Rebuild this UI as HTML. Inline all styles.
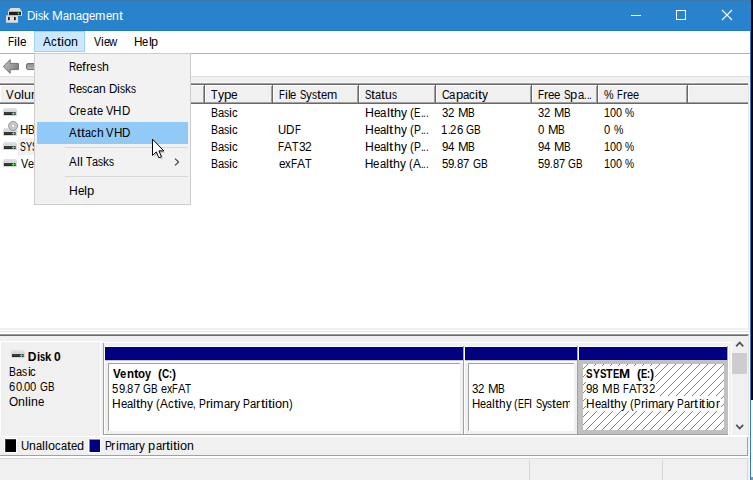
<!DOCTYPE html>
<html>
<head>
<meta charset="utf-8">
<title>Disk Management</title>
<style>
html,body{margin:0;padding:0;}
body{width:753px;height:480px;overflow:hidden;position:relative;background:#f0f0f0;font-family:"Liberation Sans",sans-serif;font-size:12px;}
.a{position:absolute;}
.t{position:absolute;white-space:pre;line-height:16px;height:16px;font-size:12px;}
.t i{position:absolute;top:0;font-style:normal;white-space:pre;transform-origin:0 0;}
.tbg{position:absolute;}
#win{position:absolute;left:0;top:0;width:750px;height:480px;overflow:hidden;background:#f0f0f0;}
</style>
</head>
<body>
<!-- outside-right strip -->
<div class="a" style="left:751px;top:0;width:2px;height:400px;background:#000"></div>
<div class="a" style="left:751px;top:400px;width:2px;height:77px;background:#fff"></div>
<div class="a" style="left:751px;top:477px;width:2px;height:3px;background:#8f9499"></div>
<div class="a" style="left:750px;top:0;width:1px;height:480px;background:#3079bb"></div>
<div class="a" style="left:750px;top:0;width:1px;height:31px;background:#2b7fc6"></div>

<div id="win">
<!-- title bar -->
<div class="a" style="left:0;top:0;width:750px;height:31px;background:#2982cc"></div>
<div class="a" style="left:0;top:0;width:750px;height:1px;background:#3a79ad"></div>
<div class="a" style="left:0;top:30px;width:750px;height:1px;background:#1f79c9"></div>
<!-- title icon -->
<svg class="a" style="left:5px;top:7px" width="19" height="17" viewBox="5 7 19 17">
  <path d="M10.5 8 L19.5 8 L22 11.6 L8 11.6 Z" fill="#dcdcdc"/>
  <rect x="8" y="11.3" width="14" height="4.6" rx="0.6" fill="#e4e4e4"/>
  <rect x="9" y="11.8" width="12" height="3.4" fill="#1e1e1e"/>
  <circle cx="18.5" cy="13.5" r="0.9" fill="#3fe03f"/>
  <rect x="6" y="15.2" width="12" height="7.6" rx="0.6" fill="#dedede"/>
  <rect x="6" y="15.2" width="12" height="1" fill="#b9b2ac"/>
  <rect x="8" y="17" width="1.7" height="3.2" fill="#1c1c1c"/>
  <rect x="14" y="17" width="1.7" height="3.2" fill="#1c1c1c"/>
</svg>
<!-- window controls -->
<div class="a" style="left:631px;top:15px;width:10px;height:1px;background:#fff"></div>
<div class="a" style="left:676px;top:10px;width:8px;height:8px;border:1px solid #fff"></div>
<svg class="a" style="left:721px;top:9px" width="12" height="12" viewBox="0 0 12 12"><path d="M1 1 L11 11 M11 1 L1 11" stroke="#fff" stroke-width="1.1" fill="none"/></svg>

<!-- menu bar -->
<div class="a" style="left:0;top:31px;width:750px;height:22px;background:#fff"></div>
<div class="a" style="left:34px;top:31px;width:49px;height:19px;background:#cce8ff;border:1px solid #99d1ff"></div>
<div class="a" style="left:0;top:53px;width:750px;height:1px;background:#b2b2b2"></div>
<!-- toolbar -->
<div class="a" style="left:0;top:54px;width:750px;height:23px;background:#fff"></div>
<div class="a" style="left:0;top:76px;width:750px;height:1px;background:#dfdfdf"></div>
<div class="a" style="left:0;top:82px;width:750px;height:1px;background:#f8f8f8"></div>
<!-- back arrow -->
<svg class="a" style="left:2px;top:58px" width="18" height="17" viewBox="0 0 18 17">
  <defs><linearGradient id="ga" x1="0" y1="0" x2="1" y2="0.35"><stop offset="0" stop-color="#c4c4c4"/><stop offset="0.55" stop-color="#a2a2a2"/><stop offset="1" stop-color="#858585"/></linearGradient></defs>
  <path d="M1.2 8.5 L8.2 1.6 L8.2 5.4 L16.4 5.4 L16.4 11.6 L8.2 11.6 L8.2 15.4 Z" fill="url(#ga)" stroke="#737373" stroke-width="1" stroke-linejoin="round"/>
</svg>
<div class="a" style="left:26px;top:63px;width:10px;height:5px;background:linear-gradient(#8e8e8e,#b4b4b4);border:1px solid #737373;border-radius:2px"></div>

<!-- list view -->
<div class="a" style="left:0;top:83px;width:750px;height:1px;background:#a0a0a0"></div>
<div class="a" style="left:0;top:84px;width:750px;height:1px;background:#696969"></div>
<div class="a" style="left:0;top:85px;width:750px;height:243px;background:#fff"></div>
<!-- header -->
<div class="a" id="hdr" style="left:0;top:85px;width:688px;height:19px;"></div>
<div class="a" style="left:0px;top:85px;width:748px;height:19px;background:#f0f0f0;"></div>
<div class="a" style="left:0px;top:85px;width:748px;height:1px;background:#fff;"></div>
<div class="a" style="left:0px;top:102px;width:748px;height:1px;background:#a0a0a0;"></div>
<div class="a" style="left:0px;top:103px;width:748px;height:1px;background:#696969;"></div>
<div class="a" style="left:0px;top:85px;width:1px;height:17px;background:#fff;"></div>
<div class="a" style="left:203px;top:86px;width:1px;height:17px;background:#a0a0a0;"></div>
<div class="a" style="left:204px;top:85px;width:1px;height:19px;background:#696969;"></div>
<div class="a" style="left:205px;top:85px;width:1px;height:17px;background:#fff;"></div>
<div class="a" style="left:271px;top:86px;width:1px;height:17px;background:#a0a0a0;"></div>
<div class="a" style="left:272px;top:85px;width:1px;height:19px;background:#696969;"></div>
<div class="a" style="left:273px;top:85px;width:1px;height:17px;background:#fff;"></div>
<div class="a" style="left:357px;top:86px;width:1px;height:17px;background:#a0a0a0;"></div>
<div class="a" style="left:358px;top:85px;width:1px;height:19px;background:#696969;"></div>
<div class="a" style="left:359px;top:85px;width:1px;height:17px;background:#fff;"></div>
<div class="a" style="left:434px;top:86px;width:1px;height:17px;background:#a0a0a0;"></div>
<div class="a" style="left:435px;top:85px;width:1px;height:19px;background:#696969;"></div>
<div class="a" style="left:436px;top:85px;width:1px;height:17px;background:#fff;"></div>
<div class="a" style="left:530px;top:86px;width:1px;height:17px;background:#a0a0a0;"></div>
<div class="a" style="left:531px;top:85px;width:1px;height:19px;background:#696969;"></div>
<div class="a" style="left:532px;top:85px;width:1px;height:17px;background:#fff;"></div>
<div class="a" style="left:596px;top:86px;width:1px;height:17px;background:#a0a0a0;"></div>
<div class="a" style="left:597px;top:85px;width:1px;height:19px;background:#696969;"></div>
<div class="a" style="left:598px;top:85px;width:1px;height:17px;background:#fff;"></div>
<div class="a" style="left:686px;top:86px;width:1px;height:17px;background:#a0a0a0;"></div>
<div class="a" style="left:687px;top:85px;width:1px;height:19px;background:#696969;"></div>
<div class="a" style="left:688px;top:85px;width:1px;height:17px;background:#fff;"></div>
<div class="a" style="left:748px;top:83px;width:1px;height:353px;background:#e3e3e3;"></div>
<div class="a" style="left:749px;top:83px;width:1px;height:353px;background:#fff;"></div>
<!-- selected row (inactive) -->
<div class="a" style="left:18px;top:138px;width:70px;height:17px;background:#f0f0f0"></div>
<svg class="a" style="left:3px;top:108px" width="14" height="8" viewBox="0 0 14 8"><path d="M1.2 0 L12.8 0 L14 2.2 L14 8 L0 8 L0 2.2 Z" fill="#d6d8dc"/><path d="M1.2 0 L12.8 0 L13.6 1.6 L0.4 1.6 Z" fill="#dfe1e4"/><rect x="1" y="4.1" width="11.6" height="2.9" fill="#2b2b2b"/><rect x="1.8" y="5.3" width="6.4" height="0.5" fill="#4a4a4a"/><rect x="8.8" y="5" width="3.1" height="1.1" fill="#2fd82f"/><rect x="9.8" y="4.1" width="1.1" height="2.9" fill="#2fd82f"/><rect x="9.8" y="5" width="1.1" height="1.1" fill="#7dff7d"/></svg>
<svg class="a" style="left:3px;top:128px" width="14" height="8" viewBox="0 0 14 8"><path d="M1.2 0 L12.8 0 L14 2.2 L14 8 L0 8 L0 2.2 Z" fill="#d6d8dc"/><path d="M1.2 0 L12.8 0 L13.6 1.6 L0.4 1.6 Z" fill="#dfe1e4"/><rect x="1" y="4.1" width="11.6" height="2.9" fill="#2b2b2b"/><rect x="1.8" y="5.3" width="6.4" height="0.5" fill="#4a4a4a"/><rect x="8.8" y="5" width="3.1" height="1.1" fill="#2fd82f"/><rect x="9.8" y="4.1" width="1.1" height="2.9" fill="#2fd82f"/><rect x="9.8" y="5" width="1.1" height="1.1" fill="#7dff7d"/></svg>
<svg class="a" style="left:7px;top:120px" width="12" height="12" viewBox="0 0 12 12"><circle cx="6.1" cy="5.9" r="4.5" fill="#c9ccca" stroke="#8a8c8a" stroke-width="0.9"/><circle cx="6.1" cy="5.9" r="2.3" fill="#b4b7b5"/><circle cx="6.1" cy="5.9" r="1.3" fill="#fff"/></svg>
<svg class="a" style="left:3px;top:142px" width="14" height="8" viewBox="0 0 14 8"><path d="M1.2 0 L12.8 0 L14 2.2 L14 8 L0 8 L0 2.2 Z" fill="#d6d8dc"/><path d="M1.2 0 L12.8 0 L13.6 1.6 L0.4 1.6 Z" fill="#dfe1e4"/><rect x="1" y="4.1" width="11.6" height="2.9" fill="#2b2b2b"/><rect x="1.8" y="5.3" width="6.4" height="0.5" fill="#4a4a4a"/><rect x="8.8" y="5" width="3.1" height="1.1" fill="#2fd82f"/><rect x="9.8" y="4.1" width="1.1" height="2.9" fill="#2fd82f"/><rect x="9.8" y="5" width="1.1" height="1.1" fill="#7dff7d"/></svg>
<svg class="a" style="left:3px;top:159px" width="14" height="8" viewBox="0 0 14 8"><path d="M1.2 0 L12.8 0 L14 2.2 L14 8 L0 8 L0 2.2 Z" fill="#d6d8dc"/><path d="M1.2 0 L12.8 0 L13.6 1.6 L0.4 1.6 Z" fill="#dfe1e4"/><rect x="1" y="4.1" width="11.6" height="2.9" fill="#2b2b2b"/><rect x="1.8" y="5.3" width="6.4" height="0.5" fill="#4a4a4a"/><rect x="8.8" y="5" width="3.1" height="1.1" fill="#2fd82f"/><rect x="9.8" y="4.1" width="1.1" height="2.9" fill="#2fd82f"/><rect x="9.8" y="5" width="1.1" height="1.1" fill="#7dff7d"/></svg>

<!-- splitter -->
<div class="a" style="left:0;top:328px;width:750px;height:2px;background:#f0f0f0"></div>
<div class="a" style="left:0;top:330px;width:750px;height:1px;background:#fff"></div>
<div class="a" style="left:0;top:331px;width:750px;height:1px;background:#e3e3e3"></div>
<div class="a" style="left:0;top:332px;width:750px;height:2px;background:#fff"></div>
<div class="a" style="left:0;top:334px;width:749px;height:1px;background:#a0a0a0"></div>
<div class="a" style="left:0;top:335px;width:748px;height:1px;background:#696969"></div>

<!-- graphical view -->
<div class="a" style="left:0px;top:336px;width:748px;height:101px;background:#f0f0f0;"></div>
<div class="a" style="left:0px;top:341px;width:103px;height:1px;background:#fff;"></div>
<div class="a" style="left:103px;top:342px;width:629px;height:1px;background:#fff;"></div>
<div class="a" style="left:0px;top:341px;width:1px;height:96px;background:#fff;"></div>
<div class="a" style="left:100px;top:342px;width:1px;height:93px;background:#fff;"></div>
<div class="a" style="left:103px;top:343px;width:1px;height:92px;background:#a0a0a0;"></div>
<div class="a" style="left:104px;top:346px;width:624px;height:1px;background:#fff;"></div>
<div class="a" style="left:104px;top:346px;width:1px;height:89px;background:#fff;"></div>
<div class="a" style="left:105px;top:347px;width:358px;height:13px;background:#000080;"></div>
<div class="a" style="left:463px;top:346px;width:1px;height:89px;background:#a0a0a0;"></div>
<div class="a" style="left:105px;top:360px;width:358px;height:1px;background:#c6c6c6;"></div>
<div class="a" style="left:105px;top:361px;width:358px;height:2px;background:#f8f8f8;"></div>
<div class="a" style="left:105px;top:363px;width:358px;height:71px;background:#f0f0f0;"></div>
<div class="a" style="left:108px;top:363px;width:352px;height:68px;background:#fff;"></div>
<div class="a" style="left:108px;top:363px;width:352px;height:1px;background:#a0a0a0;"></div>
<div class="a" style="left:108px;top:363px;width:1px;height:68px;background:#a0a0a0;"></div>
<div class="a" style="left:104px;top:434px;width:360px;height:1px;background:#a0a0a0;"></div>
<div class="a" style="left:464px;top:346px;width:1px;height:89px;background:#fff;"></div>
<div class="a" style="left:465px;top:347px;width:112px;height:13px;background:#000080;"></div>
<div class="a" style="left:577px;top:346px;width:1px;height:89px;background:#a0a0a0;"></div>
<div class="a" style="left:465px;top:360px;width:112px;height:1px;background:#c6c6c6;"></div>
<div class="a" style="left:465px;top:361px;width:112px;height:2px;background:#f8f8f8;"></div>
<div class="a" style="left:465px;top:363px;width:112px;height:71px;background:#f0f0f0;"></div>
<div class="a" style="left:468px;top:363px;width:106px;height:68px;background:#fff;"></div>
<div class="a" style="left:468px;top:363px;width:106px;height:1px;background:#a0a0a0;"></div>
<div class="a" style="left:468px;top:363px;width:1px;height:68px;background:#a0a0a0;"></div>
<div class="a" style="left:464px;top:434px;width:114px;height:1px;background:#a0a0a0;"></div>
<div class="a" style="left:578px;top:346px;width:1px;height:89px;background:#fff;"></div>
<div class="a" style="left:579px;top:347px;width:148px;height:13px;background:#000080;"></div>
<div class="a" style="left:727px;top:346px;width:1px;height:89px;background:#a0a0a0;"></div>
<div class="a" style="left:578px;top:360px;width:150px;height:74px;background:#c0c0c0;"></div>
<svg class="a" style="left:583px;top:364px" width="141" height="66" shape-rendering="crispEdges"><defs><pattern id="hp" width="8" height="8" patternUnits="userSpaceOnUse"><rect width="8" height="8" fill="#fff"/><g fill="#808080"><rect x="0" y="4" width="1" height="1"/><rect x="1" y="3" width="1" height="1"/><rect x="2" y="2" width="1" height="1"/><rect x="3" y="1" width="1" height="1"/><rect x="4" y="0" width="1" height="1"/><rect x="5" y="7" width="1" height="1"/><rect x="6" y="6" width="1" height="1"/><rect x="7" y="5" width="1" height="1"/></g></pattern></defs><rect width="100%" height="100%" fill="url(#hp)"/></svg>
<div class="a" style="left:578px;top:434px;width:150px;height:1px;background:#a0a0a0;"></div>
<div class="a" style="left:100px;top:435px;width:648px;height:1px;background:#fff;"></div>
<div class="a" style="left:0px;top:436px;width:748px;height:1px;background:#fff;"></div>
<div class="a" style="left:731px;top:342px;width:1px;height:94px;background:#fff;"></div>
<div class="a" style="left:728px;top:346px;width:1px;height:89px;background:#fff;"></div>
<div class="a" style="left:732px;top:343px;width:16px;height:92px;background:#f0f0f0;"></div>
<div class="a" style="left:732px;top:353.4px;width:15px;height:21px;background:#cdcdcd;"></div>
<svg class="a" style="left:735px;top:340.4px" width="10" height="8" viewBox="0 0 10 8"><path d="M1.2 6.3 L4.7 2.5 L8.2 6.3" stroke="#505050" stroke-width="1.8" fill="none"/></svg>
<svg class="a" style="left:735px;top:423px" width="10" height="8" viewBox="0 0 10 8"><path d="M1.2 1.8 L4.7 5.5 L8.2 1.8" stroke="#505050" stroke-width="1.8" fill="none"/></svg>
<svg class="a" style="left:11px;top:350px" width="14" height="8" viewBox="0 0 14 8"><path d="M1.2 0 L12.8 0 L14 2.2 L14 8 L0 8 L0 2.2 Z" fill="#d6d8dc"/><path d="M1.2 0 L12.8 0 L13.6 1.6 L0.4 1.6 Z" fill="#dfe1e4"/><rect x="1" y="4.1" width="11.6" height="2.9" fill="#2b2b2b"/><rect x="1.8" y="5.3" width="6.4" height="0.5" fill="#4a4a4a"/><rect x="8.8" y="5" width="3.1" height="1.1" fill="#2fd82f"/><rect x="9.8" y="4.1" width="1.1" height="2.9" fill="#2fd82f"/><rect x="9.8" y="5" width="1.1" height="1.1" fill="#7dff7d"/></svg>

<!-- legend -->
<div class="a" style="left:0px;top:437px;width:747px;height:18px;background:#f0f0f0;"></div>
<div class="a" style="left:747px;top:437px;width:1px;height:19px;background:#a0a0a0;"></div>
<div class="a" style="left:0px;top:455px;width:748px;height:1px;background:#a0a0a0;"></div>
<div class="a" style="left:0px;top:456px;width:750px;height:2px;background:#fff;"></div>
<div class="a" style="left:0px;top:458px;width:750px;height:1px;background:#d9d9d9;"></div>
<div class="a" style="left:4px;top:438px;width:13px;height:15px;background:#fff;"></div>
<div class="a" style="left:5px;top:439px;width:11px;height:13px;background:#3a3a3a;"></div>
<div class="a" style="left:6px;top:440px;width:10px;height:12px;background:#000;"></div>
<div class="a" style="left:88px;top:438px;width:13px;height:15px;background:#fff;"></div>
<div class="a" style="left:89px;top:439px;width:11px;height:13px;background:#8c8c84;"></div>
<div class="a" style="left:90px;top:440px;width:10px;height:12px;background:#000080;"></div>

<!-- status bar -->
<div class="a" style="left:529px;top:460px;width:1px;height:20px;background:#d7d7d7"></div>
<div class="a" style="left:662px;top:460px;width:1px;height:20px;background:#d7d7d7"></div>
<div class="a" style="left:747px;top:460px;width:1px;height:20px;background:#d7d7d7"></div>
<div class="a" style="left:749px;top:436px;width:1px;height:44px;background:#f8f8f8"></div>

<div class="t" style="left:26.69px;top:7.67px;color:#fff;font-size:12.5px;width:97.2px;"><i style="left:0.00px;transform:scaleX(0.931)">D</i><i style="left:8.41px;transform:scaleX(1.045)">i</i><i style="left:11.31px;transform:scaleX(0.814)">s</i><i style="left:16.40px;transform:scaleX(0.953)">k</i><i style="left:22.36px"> </i><i style="left:25.64px;transform:scaleX(1.034)">M</i><i style="left:36.40px;transform:scaleX(0.877)">a</i><i style="left:42.50px;transform:scaleX(0.976)">n</i><i style="left:49.29px;transform:scaleX(0.877)">a</i><i style="left:55.39px;transform:scaleX(1.015)">g</i><i style="left:62.45px;transform:scaleX(0.902)">e</i><i style="left:68.72px;transform:scaleX(0.992)">m</i><i style="left:79.04px;transform:scaleX(0.902)">e</i><i style="left:85.31px;transform:scaleX(0.976)">n</i><i style="left:92.10px;transform:scaleX(1.170)">t</i></div>
<div class="t" style="left:7.82px;top:33.84px;width:19.7px;"><i style="left:0.00px;transform:scaleX(0.830)">F</i><i style="left:6.09px;transform:scaleX(1.133)">i</i><i style="left:9.11px;transform:scaleX(1.133)">l</i><i style="left:12.13px;transform:scaleX(0.978)">e</i></div>
<div class="t" style="left:43.30px;top:33.84px;width:35.8px;"><i style="left:0.00px;transform:scaleX(0.988)">A</i><i style="left:7.90px;transform:scaleX(0.943)">c</i><i style="left:13.56px;transform:scaleX(1.246)">t</i><i style="left:17.72px;transform:scaleX(1.113)">i</i><i style="left:20.69px;transform:scaleX(1.076)">o</i><i style="left:27.87px;transform:scaleX(1.039)">n</i></div>
<div class="t" style="left:93.70px;top:33.84px;width:25.0px;"><i style="left:0.00px;transform:scaleX(0.882)">V</i><i style="left:7.06px;transform:scaleX(1.033)">i</i><i style="left:9.82px;transform:scaleX(0.891)">e</i><i style="left:15.76px;transform:scaleX(0.946)">w</i></div>
<div class="t" style="left:133.88px;top:33.84px;width:25.6px;"><i style="left:0.00px;transform:scaleX(0.978)">H</i><i style="left:8.48px;transform:scaleX(0.935)">e</i><i style="left:14.72px;transform:scaleX(1.084)">l</i><i style="left:17.61px;transform:scaleX(1.052)">p</i></div>
<div class="t" style="left:6.10px;top:86.84px;width:42.5px;"><i style="left:0.00px;transform:scaleX(0.947)">V</i><i style="left:7.58px;transform:scaleX(1.071)">o</i><i style="left:14.72px;transform:scaleX(1.108)">l</i><i style="left:17.68px;transform:scaleX(1.034)">u</i><i style="left:24.58px;transform:scaleX(1.051)">m</i><i style="left:35.09px;transform:scaleX(0.956)">e</i></div>
<div class="t" style="left:211.03px;top:86.84px;width:27.8px;"><i style="left:0.00px;transform:scaleX(0.903)">T</i><i style="left:6.62px;transform:scaleX(1.017)">y</i><i style="left:12.72px;transform:scaleX(1.113)">p</i><i style="left:20.14px;transform:scaleX(0.990)">e</i></div>
<div class="t" style="left:278.86px;top:86.84px;width:59.8px;"><i style="left:0.00px;transform:scaleX(0.793)">F</i><i style="left:5.82px;transform:scaleX(1.083)">i</i><i style="left:8.70px;transform:scaleX(1.083)">l</i><i style="left:11.59px;transform:scaleX(0.934)">e</i><i style="left:17.83px"> </i><i style="left:21.09px;transform:scaleX(0.791)">S</i><i style="left:27.42px;transform:scaleX(0.960)">y</i><i style="left:33.18px;transform:scaleX(0.843)">s</i><i style="left:38.24px;transform:scaleX(1.212)">t</i><i style="left:42.28px;transform:scaleX(0.934)">e</i><i style="left:48.51px;transform:scaleX(1.027)">m</i></div>
<div class="t" style="left:364.70px;top:86.84px;width:33.3px;"><i style="left:0.00px;transform:scaleX(0.791)">S</i><i style="left:6.33px;transform:scaleX(1.213)">t</i><i style="left:10.38px;transform:scaleX(0.910)">a</i><i style="left:16.45px;transform:scaleX(1.213)">t</i><i style="left:20.50px;transform:scaleX(1.012)">u</i><i style="left:27.25px;transform:scaleX(0.844)">s</i></div>
<div class="t" style="left:441.60px;top:86.84px;width:47.4px;"><i style="left:0.00px;transform:scaleX(0.884)">C</i><i style="left:7.66px;transform:scaleX(0.943)">a</i><i style="left:13.95px;transform:scaleX(1.090)">p</i><i style="left:21.23px;transform:scaleX(0.943)">a</i><i style="left:27.52px;transform:scaleX(0.952)">c</i><i style="left:33.23px;transform:scaleX(1.124)">i</i><i style="left:36.23px;transform:scaleX(1.257)">t</i><i style="left:40.42px;transform:scaleX(0.996)">y</i></div>
<div class="t" style="left:537.64px;top:86.84px;width:55.2px;"><i style="left:0.00px;transform:scaleX(0.814)">F</i><i style="left:5.97px;transform:scaleX(1.066)">r</i><i style="left:10.22px;transform:scaleX(0.958)">e</i><i style="left:16.62px;transform:scaleX(0.958)">e</i><i style="left:23.02px"> </i><i style="left:26.37px;transform:scaleX(0.811)">S</i><i style="left:32.86px;transform:scaleX(1.077)">p</i><i style="left:40.05px;transform:scaleX(0.932)">a</i><i style="left:46.27px;transform:scaleX(0.795)">.</i><i style="left:48.92px;transform:scaleX(0.795)">.</i><i style="left:51.57px;transform:scaleX(0.795)">.</i></div>
<div class="t" style="left:604.36px;top:86.84px;width:35.9px;"><i style="left:0.00px;transform:scaleX(0.900)">%</i><i style="left:9.60px"> </i><i style="left:12.81px;transform:scaleX(0.781)">F</i><i style="left:18.53px;transform:scaleX(1.022)">r</i><i style="left:22.62px;transform:scaleX(0.919)">e</i><i style="left:28.75px;transform:scaleX(0.919)">e</i></div>
<div class="t" style="left:210.88px;top:104.84px;width:28.0px;"><i style="left:0.00px;transform:scaleX(0.875)">B</i><i style="left:7.00px;transform:scaleX(0.931)">a</i><i style="left:13.21px;transform:scaleX(0.864)">s</i><i style="left:18.40px;transform:scaleX(1.109)">i</i><i style="left:21.35px;transform:scaleX(0.940)">c</i></div>
<div class="t" style="left:364.74px;top:104.84px;width:65.0px;"><i style="left:0.00px;transform:scaleX(1.028)">H</i><i style="left:8.91px;transform:scaleX(0.983)">e</i><i style="left:15.47px;transform:scaleX(0.957)">a</i><i style="left:21.86px;transform:scaleX(1.140)">l</i><i style="left:24.90px;transform:scaleX(1.276)">t</i><i style="left:29.15px;transform:scaleX(1.064)">h</i><i style="left:36.25px;transform:scaleX(1.010)">y</i><i style="left:42.31px"> </i><i style="left:45.75px;transform:scaleX(0.948)">(</i><i style="left:49.54px;transform:scaleX(0.793)">E</i><i style="left:55.89px;transform:scaleX(0.816)">.</i><i style="left:58.61px;transform:scaleX(0.816)">.</i><i style="left:61.33px;transform:scaleX(0.816)">.</i></div>
<div class="t" style="left:441.74px;top:104.84px;width:34.3px;"><i style="left:0.00px;transform:scaleX(0.952)">3</i><i style="left:6.35px;transform:scaleX(0.952)">2</i><i style="left:12.71px"> </i><i style="left:15.94px;transform:scaleX(1.059)">M</i><i style="left:26.52px;transform:scaleX(0.844)">B</i></div>
<div class="t" style="left:538.05px;top:104.84px;width:33.6px;"><i style="left:0.00px;transform:scaleX(0.932)">3</i><i style="left:6.22px;transform:scaleX(0.932)">2</i><i style="left:12.44px"> </i><i style="left:15.60px;transform:scaleX(1.036)">M</i><i style="left:25.95px;transform:scaleX(0.826)">B</i></div>
<div class="t" style="left:604.02px;top:104.84px;width:31.3px;"><i style="left:0.00px;transform:scaleX(0.903)">1</i><i style="left:6.03px;transform:scaleX(0.903)">0</i><i style="left:12.05px;transform:scaleX(0.903)">0</i><i style="left:18.08px"> </i><i style="left:21.14px;transform:scaleX(0.857)">%</i></div>
<div class="t" style="left:210.88px;top:121.84px;width:28.0px;"><i style="left:0.00px;transform:scaleX(0.875)">B</i><i style="left:7.00px;transform:scaleX(0.931)">a</i><i style="left:13.21px;transform:scaleX(0.864)">s</i><i style="left:18.40px;transform:scaleX(1.109)">i</i><i style="left:21.35px;transform:scaleX(0.940)">c</i></div>
<div class="t" style="left:278.29px;top:121.84px;width:23.4px;"><i style="left:0.00px;transform:scaleX(0.948)">U</i><i style="left:8.21px;transform:scaleX(0.967)">D</i><i style="left:16.59px;transform:scaleX(0.795)">F</i></div>
<div class="t" style="left:364.75px;top:121.84px;width:65.0px;"><i style="left:0.00px;transform:scaleX(1.017)">H</i><i style="left:8.81px;transform:scaleX(0.973)">e</i><i style="left:15.31px;transform:scaleX(0.946)">a</i><i style="left:21.62px;transform:scaleX(1.128)">l</i><i style="left:24.63px;transform:scaleX(1.262)">t</i><i style="left:28.83px;transform:scaleX(1.053)">h</i><i style="left:35.86px;transform:scaleX(0.999)">y</i><i style="left:41.86px"> </i><i style="left:45.26px;transform:scaleX(0.937)">(</i><i style="left:49.00px;transform:scaleX(0.869)">P</i><i style="left:55.95px;transform:scaleX(0.807)">.</i><i style="left:58.65px;transform:scaleX(0.807)">.</i><i style="left:61.34px;transform:scaleX(0.807)">.</i></div>
<div class="t" style="left:441.39px;top:121.84px;width:40.4px;"><i style="left:0.00px;transform:scaleX(0.946)">1</i><i style="left:6.31px;transform:scaleX(0.762)">.</i><i style="left:8.85px;transform:scaleX(0.946)">2</i><i style="left:15.16px;transform:scaleX(0.946)">6</i><i style="left:21.48px"> </i><i style="left:24.69px;transform:scaleX(0.861)">G</i><i style="left:32.72px;transform:scaleX(0.839)">B</i></div>
<div class="t" style="left:538.04px;top:121.84px;width:27.9px;"><i style="left:0.00px;transform:scaleX(0.951)">0</i><i style="left:6.34px"> </i><i style="left:9.57px;transform:scaleX(1.057)">M</i><i style="left:20.14px;transform:scaleX(0.843)">B</i></div>
<div class="t" style="left:604.35px;top:121.84px;width:19.8px;"><i style="left:0.00px;transform:scaleX(0.929)">0</i><i style="left:6.20px"> </i><i style="left:9.35px;transform:scaleX(0.882)">%</i></div>
<div class="t" style="left:210.88px;top:138.84px;width:28.0px;"><i style="left:0.00px;transform:scaleX(0.875)">B</i><i style="left:7.00px;transform:scaleX(0.931)">a</i><i style="left:13.21px;transform:scaleX(0.864)">s</i><i style="left:18.40px;transform:scaleX(1.109)">i</i><i style="left:21.35px;transform:scaleX(0.940)">c</i></div>
<div class="t" style="left:278.23px;top:138.84px;width:34.8px;"><i style="left:0.00px;transform:scaleX(0.821)">F</i><i style="left:6.02px;transform:scaleX(0.995)">A</i><i style="left:13.98px;transform:scaleX(0.882)">T</i><i style="left:20.45px;transform:scaleX(0.997)">3</i><i style="left:27.10px;transform:scaleX(0.997)">2</i></div>
<div class="t" style="left:364.75px;top:138.84px;width:65.0px;"><i style="left:0.00px;transform:scaleX(1.017)">H</i><i style="left:8.81px;transform:scaleX(0.973)">e</i><i style="left:15.31px;transform:scaleX(0.946)">a</i><i style="left:21.62px;transform:scaleX(1.128)">l</i><i style="left:24.63px;transform:scaleX(1.262)">t</i><i style="left:28.83px;transform:scaleX(1.053)">h</i><i style="left:35.86px;transform:scaleX(0.999)">y</i><i style="left:41.86px"> </i><i style="left:45.26px;transform:scaleX(0.937)">(</i><i style="left:49.00px;transform:scaleX(0.869)">P</i><i style="left:55.95px;transform:scaleX(0.807)">.</i><i style="left:58.65px;transform:scaleX(0.807)">.</i><i style="left:61.34px;transform:scaleX(0.807)">.</i></div>
<div class="t" style="left:441.56px;top:138.84px;width:34.5px;"><i style="left:0.00px;transform:scaleX(0.957)">9</i><i style="left:6.39px;transform:scaleX(0.957)">4</i><i style="left:12.78px"> </i><i style="left:16.03px;transform:scaleX(1.065)">M</i><i style="left:26.67px;transform:scaleX(0.849)">B</i></div>
<div class="t" style="left:537.87px;top:138.84px;width:33.7px;"><i style="left:0.00px;transform:scaleX(0.937)">9</i><i style="left:6.25px;transform:scaleX(0.937)">4</i><i style="left:12.50px"> </i><i style="left:15.68px;transform:scaleX(1.042)">M</i><i style="left:26.10px;transform:scaleX(0.831)">B</i></div>
<div class="t" style="left:604.02px;top:138.84px;width:31.3px;"><i style="left:0.00px;transform:scaleX(0.903)">1</i><i style="left:6.03px;transform:scaleX(0.903)">0</i><i style="left:12.05px;transform:scaleX(0.903)">0</i><i style="left:18.08px"> </i><i style="left:21.14px;transform:scaleX(0.857)">%</i></div>
<div class="t" style="left:210.88px;top:155.84px;width:28.0px;"><i style="left:0.00px;transform:scaleX(0.875)">B</i><i style="left:7.00px;transform:scaleX(0.931)">a</i><i style="left:13.21px;transform:scaleX(0.864)">s</i><i style="left:18.40px;transform:scaleX(1.109)">i</i><i style="left:21.35px;transform:scaleX(0.940)">c</i></div>
<div class="t" style="left:278.63px;top:155.84px;width:34.1px;"><i style="left:0.00px;transform:scaleX(0.982)">e</i><i style="left:6.55px;transform:scaleX(0.958)">x</i><i style="left:12.30px;transform:scaleX(0.834)">F</i><i style="left:18.41px;transform:scaleX(1.009)">A</i><i style="left:26.49px;transform:scaleX(0.895)">T</i></div>
<div class="t" style="left:364.76px;top:155.84px;width:65.0px;"><i style="left:0.00px;transform:scaleX(1.000)">H</i><i style="left:8.67px;transform:scaleX(0.957)">e</i><i style="left:15.05px;transform:scaleX(0.931)">a</i><i style="left:21.26px;transform:scaleX(1.109)">l</i><i style="left:24.22px;transform:scaleX(1.241)">t</i><i style="left:28.35px;transform:scaleX(1.035)">h</i><i style="left:35.26px;transform:scaleX(0.982)">y</i><i style="left:41.16px"> </i><i style="left:44.50px;transform:scaleX(0.922)">(</i><i style="left:48.18px;transform:scaleX(0.984)">A</i><i style="left:56.06px;transform:scaleX(0.794)">.</i><i style="left:58.71px;transform:scaleX(0.794)">.</i><i style="left:61.35px;transform:scaleX(0.794)">.</i></div>
<div class="t" style="left:441.74px;top:155.84px;width:47.1px;"><i style="left:0.00px;transform:scaleX(0.953)">5</i><i style="left:6.36px;transform:scaleX(0.953)">9</i><i style="left:12.72px;transform:scaleX(0.767)">.</i><i style="left:15.28px;transform:scaleX(0.953)">8</i><i style="left:21.64px;transform:scaleX(0.953)">7</i><i style="left:28.00px"> </i><i style="left:31.23px;transform:scaleX(0.867)">G</i><i style="left:39.32px;transform:scaleX(0.845)">B</i></div>
<div class="t" style="left:538.05px;top:155.84px;width:45.8px;"><i style="left:0.00px;transform:scaleX(0.926)">5</i><i style="left:6.18px;transform:scaleX(0.926)">9</i><i style="left:12.35px;transform:scaleX(0.745)">.</i><i style="left:14.84px;transform:scaleX(0.926)">8</i><i style="left:21.02px;transform:scaleX(0.926)">7</i><i style="left:27.19px"> </i><i style="left:30.33px;transform:scaleX(0.842)">G</i><i style="left:38.19px;transform:scaleX(0.821)">B</i></div>
<div class="t" style="left:604.02px;top:155.84px;width:31.3px;"><i style="left:0.00px;transform:scaleX(0.903)">1</i><i style="left:6.03px;transform:scaleX(0.903)">0</i><i style="left:12.05px;transform:scaleX(0.903)">0</i><i style="left:18.08px"> </i><i style="left:21.14px;transform:scaleX(0.857)">%</i></div>
<div class="t" style="left:19.79px;top:121.84px;width:49.2px;"><i style="left:0.00px;transform:scaleX(0.966)">H</i><i style="left:8.37px;transform:scaleX(0.845)">B</i><i style="left:15.13px;transform:scaleX(0.842)">C</i><i style="left:22.43px;transform:scaleX(0.954)">D</i><i style="left:30.70px;transform:scaleX(0.733)">_</i><i style="left:35.59px;transform:scaleX(0.825)">P</i><i style="left:42.20px;transform:scaleX(0.745)">E</i></div>
<div class="t" style="left:20.43px;top:138.84px;width:57.4px;"><i style="left:0.00px;transform:scaleX(0.727)">S</i><i style="left:5.82px;transform:scaleX(0.756)">Y</i><i style="left:11.87px;transform:scaleX(0.727)">S</i><i style="left:17.69px;transform:scaleX(0.783)">T</i><i style="left:23.43px;transform:scaleX(0.693)">E</i><i style="left:28.97px;transform:scaleX(0.985)">M</i><i style="left:38.82px"> </i><i style="left:41.82px;transform:scaleX(0.828)">(</i><i style="left:45.13px;transform:scaleX(0.693)">E</i><i style="left:50.67px;transform:scaleX(0.713)">:</i><i style="left:53.05px;transform:scaleX(0.828)">)</i></div>
<div class="t" style="left:20.70px;top:155.84px;width:56.9px;"><i style="left:0.00px;transform:scaleX(0.898)">V</i><i style="left:7.19px;transform:scaleX(0.907)">e</i><i style="left:13.24px;transform:scaleX(0.981)">n</i><i style="left:19.79px;transform:scaleX(1.176)">t</i><i style="left:23.71px;transform:scaleX(1.016)">o</i><i style="left:30.49px;transform:scaleX(0.932)">y</i><i style="left:36.08px"> </i><i style="left:39.25px;transform:scaleX(0.874)">(</i><i style="left:42.75px;transform:scaleX(0.827)">C</i><i style="left:49.91px;transform:scaleX(0.753)">:</i><i style="left:52.42px;transform:scaleX(0.874)">)</i></div>
<div class="t" style="left:27.85px;top:348.84px;font-weight:bold;width:34.1px;"><i style="left:0.00px;transform:scaleX(1.000)">D</i><i style="left:8.67px;transform:scaleX(0.936)">i</i><i style="left:11.79px;transform:scaleX(0.769)">s</i><i style="left:16.92px;transform:scaleX(0.953)">k</i><i style="left:23.28px"> </i><i style="left:26.44px;transform:scaleX(1.004)">0</i></div>
<div class="t" style="left:9.29px;top:363.84px;width:27.8px;"><i style="left:0.00px;transform:scaleX(0.868)">B</i><i style="left:6.95px;transform:scaleX(0.924)">a</i><i style="left:13.11px;transform:scaleX(0.857)">s</i><i style="left:18.26px;transform:scaleX(1.101)">i</i><i style="left:21.19px;transform:scaleX(0.933)">c</i></div>
<div class="t" style="left:9.38px;top:378.84px;width:45.9px;"><i style="left:0.00px;transform:scaleX(0.929)">6</i><i style="left:6.20px;transform:scaleX(0.929)">0</i><i style="left:12.40px;transform:scaleX(0.748)">.</i><i style="left:14.90px;transform:scaleX(0.929)">0</i><i style="left:21.10px;transform:scaleX(0.929)">0</i><i style="left:27.30px"> </i><i style="left:30.45px;transform:scaleX(0.846)">G</i><i style="left:38.34px;transform:scaleX(0.824)">B</i></div>
<div class="t" style="left:9.35px;top:393.84px;width:36.1px;"><i style="left:0.00px;transform:scaleX(0.980)">O</i><i style="left:9.15px;transform:scaleX(1.029)">n</i><i style="left:16.02px;transform:scaleX(1.103)">l</i><i style="left:18.96px;transform:scaleX(1.103)">i</i><i style="left:21.90px;transform:scaleX(1.029)">n</i><i style="left:28.77px;transform:scaleX(0.951)">e</i></div>
<div class="t" style="left:112.70px;top:365.84px;font-weight:bold;width:64.0px;"><i style="left:0.00px;transform:scaleX(0.962)">V</i><i style="left:7.70px;transform:scaleX(0.938)">e</i><i style="left:13.96px;transform:scaleX(0.962)">n</i><i style="left:21.02px;transform:scaleX(1.110)">t</i><i style="left:25.46px;transform:scaleX(0.962)">o</i><i style="left:32.51px;transform:scaleX(0.907)">y</i><i style="left:38.56px"> </i><i style="left:41.72px"> </i><i style="left:44.88px;transform:scaleX(0.999)">(</i><i style="left:48.87px;transform:scaleX(0.830)">C</i><i style="left:56.07px;transform:scaleX(0.744)">:</i><i style="left:59.04px;transform:scaleX(0.999)">)</i></div>
<div class="t" style="left:112.35px;top:380.84px;width:80.0px;"><i style="left:0.00px;transform:scaleX(0.936)">5</i><i style="left:6.25px;transform:scaleX(0.936)">9</i><i style="left:12.49px;transform:scaleX(0.754)">.</i><i style="left:15.01px;transform:scaleX(0.936)">8</i><i style="left:21.25px;transform:scaleX(0.936)">7</i><i style="left:27.50px"> </i><i style="left:30.67px;transform:scaleX(0.852)">G</i><i style="left:38.62px;transform:scaleX(0.830)">B</i><i style="left:45.27px"> </i><i style="left:48.44px;transform:scaleX(0.908)">e</i><i style="left:54.50px;transform:scaleX(0.886)">x</i><i style="left:59.82px;transform:scaleX(0.771)">F</i><i style="left:65.47px;transform:scaleX(0.934)">A</i><i style="left:72.95px;transform:scaleX(0.828)">T</i></div>
<div class="t" style="left:111.96px;top:395.84px;width:181.6px;"><i style="left:0.00px;transform:scaleX(1.001)">H</i><i style="left:8.67px;transform:scaleX(0.957)">e</i><i style="left:15.06px;transform:scaleX(0.931)">a</i><i style="left:21.27px;transform:scaleX(1.110)">l</i><i style="left:24.23px;transform:scaleX(1.242)">t</i><i style="left:28.37px;transform:scaleX(1.036)">h</i><i style="left:35.28px;transform:scaleX(0.983)">y</i><i style="left:41.18px"> </i><i style="left:44.53px;transform:scaleX(0.922)">(</i><i style="left:48.22px;transform:scaleX(0.984)">A</i><i style="left:56.09px;transform:scaleX(0.940)">c</i><i style="left:61.74px;transform:scaleX(1.242)">t</i><i style="left:65.88px;transform:scaleX(1.110)">i</i><i style="left:68.83px;transform:scaleX(0.975)">v</i><i style="left:74.69px;transform:scaleX(0.957)">e</i><i style="left:81.07px;transform:scaleX(0.794)">,</i><i style="left:83.72px"> </i><i style="left:87.07px;transform:scaleX(0.855)">P</i><i style="left:93.91px;transform:scaleX(1.064)">r</i><i style="left:98.16px;transform:scaleX(1.110)">i</i><i style="left:101.12px;transform:scaleX(1.053)">m</i><i style="left:111.64px;transform:scaleX(0.931)">a</i><i style="left:117.85px;transform:scaleX(1.064)">r</i><i style="left:122.11px;transform:scaleX(0.983)">y</i><i style="left:128.01px"> </i><i style="left:131.35px;transform:scaleX(0.855)">P</i><i style="left:138.19px;transform:scaleX(0.931)">a</i><i style="left:144.41px;transform:scaleX(1.064)">r</i><i style="left:148.66px;transform:scaleX(1.242)">t</i><i style="left:152.80px;transform:scaleX(1.110)">i</i><i style="left:155.76px;transform:scaleX(1.242)">t</i><i style="left:159.90px;transform:scaleX(1.110)">i</i><i style="left:162.86px;transform:scaleX(1.072)">o</i><i style="left:170.01px;transform:scaleX(1.036)">n</i><i style="left:176.93px;transform:scaleX(0.922)">)</i></div>
<div class="t" style="left:471.74px;top:380.84px;width:34.4px;"><i style="left:0.00px;transform:scaleX(0.955)">3</i><i style="left:6.37px;transform:scaleX(0.955)">2</i><i style="left:12.75px"> </i><i style="left:15.99px;transform:scaleX(1.062)">M</i><i style="left:26.61px;transform:scaleX(0.847)">B</i></div>
<div class="t" style="left:471.91px;top:395.84px;width:98.09px;overflow:hidden;"><i style="left:0.00px;transform:scaleX(0.953)">H</i><i style="left:8.26px;transform:scaleX(0.912)">e</i><i style="left:14.35px;transform:scaleX(0.887)">a</i><i style="left:20.27px;transform:scaleX(1.057)">l</i><i style="left:23.08px;transform:scaleX(1.183)">t</i><i style="left:27.03px;transform:scaleX(0.987)">h</i><i style="left:33.61px;transform:scaleX(0.937)">y</i><i style="left:39.23px"> </i><i style="left:42.42px;transform:scaleX(0.879)">(</i><i style="left:45.93px;transform:scaleX(0.735)">E</i><i style="left:51.82px;transform:scaleX(0.774)">F</i><i style="left:57.49px;transform:scaleX(0.929)">I</i><i style="left:60.59px"> </i><i style="left:63.78px;transform:scaleX(0.772)">S</i><i style="left:69.95px;transform:scaleX(0.937)">y</i><i style="left:75.57px;transform:scaleX(0.823)">s</i><i style="left:80.51px;transform:scaleX(1.183)">t</i><i style="left:84.45px;transform:scaleX(0.912)">e</i><i style="left:90.54px;transform:scaleX(1.003)">m</i><i style="left:100.56px"> </i><i style="left:103.75px;transform:scaleX(0.814)">P</i><i style="left:110.26px;transform:scaleX(0.887)">a</i><i style="left:116.18px;transform:scaleX(1.014)">r</i><i style="left:120.24px;transform:scaleX(1.183)">t</i><i style="left:124.18px;transform:scaleX(1.057)">i</i><i style="left:127.00px;transform:scaleX(1.183)">t</i><i style="left:130.94px;transform:scaleX(1.057)">i</i><i style="left:133.76px;transform:scaleX(1.022)">o</i><i style="left:140.58px;transform:scaleX(0.987)">n</i><i style="left:147.16px;transform:scaleX(0.879)">)</i></div>
<div class="a" style="left:586.00px;top:366px;width:69.00px;height:15px;background:#fff"></div><div class="t" style="left:586.45px;top:365.84px;font-weight:bold;width:68.7px;"><i style="left:0.00px;transform:scaleX(0.817)">S</i><i style="left:6.54px;transform:scaleX(0.864)">Y</i><i style="left:13.45px;transform:scaleX(0.817)">S</i><i style="left:19.99px;transform:scaleX(0.891)">T</i><i style="left:26.52px;transform:scaleX(0.783)">E</i><i style="left:32.79px;transform:scaleX(1.105)">M</i><i style="left:43.84px"> </i><i style="left:47.05px"> </i><i style="left:50.27px;transform:scaleX(1.017)">(</i><i style="left:54.33px;transform:scaleX(0.783)">E</i><i style="left:60.60px;transform:scaleX(0.757)">:</i><i style="left:63.63px;transform:scaleX(1.017)">)</i></div>
<div class="a" style="left:586.00px;top:381px;width:70.00px;height:15px;background:#fff"></div><div class="t" style="left:586.06px;top:380.84px;width:70.1px;"><i style="left:0.00px;transform:scaleX(0.957)">9</i><i style="left:6.39px;transform:scaleX(0.957)">8</i><i style="left:12.77px"> </i><i style="left:16.02px;transform:scaleX(1.064)">M</i><i style="left:26.66px;transform:scaleX(0.849)">B</i><i style="left:33.45px"> </i><i style="left:36.70px;transform:scaleX(0.789)">F</i><i style="left:42.48px;transform:scaleX(0.955)">A</i><i style="left:50.12px;transform:scaleX(0.847)">T</i><i style="left:56.33px;transform:scaleX(0.957)">3</i><i style="left:62.72px;transform:scaleX(0.957)">2</i></div>
<div class="a" style="left:586.00px;top:396px;width:135.00px;height:15px;background:#fff"></div><div class="t" style="left:586.48px;top:395.84px;width:133.52px;overflow:hidden;"><i style="left:0.00px;transform:scaleX(0.984)">H</i><i style="left:8.53px;transform:scaleX(0.942)">e</i><i style="left:14.82px;transform:scaleX(0.916)">a</i><i style="left:20.93px;transform:scaleX(1.092)">l</i><i style="left:23.84px;transform:scaleX(1.221)">t</i><i style="left:27.91px;transform:scaleX(1.019)">h</i><i style="left:34.71px;transform:scaleX(0.967)">y</i><i style="left:40.52px"> </i><i style="left:43.81px;transform:scaleX(0.907)">(</i><i style="left:47.43px;transform:scaleX(0.841)">P</i><i style="left:54.16px;transform:scaleX(1.047)">r</i><i style="left:58.35px;transform:scaleX(1.092)">i</i><i style="left:61.26px;transform:scaleX(1.035)">m</i><i style="left:71.61px;transform:scaleX(0.916)">a</i><i style="left:77.72px;transform:scaleX(1.047)">r</i><i style="left:81.91px;transform:scaleX(0.967)">y</i><i style="left:87.71px"> </i><i style="left:91.00px;transform:scaleX(0.841)">P</i><i style="left:97.73px;transform:scaleX(0.916)">a</i><i style="left:103.85px;transform:scaleX(1.047)">r</i><i style="left:108.03px;transform:scaleX(1.221)">t</i><i style="left:112.10px;transform:scaleX(1.092)">i</i><i style="left:115.01px;transform:scaleX(1.221)">t</i><i style="left:119.08px;transform:scaleX(1.092)">i</i><i style="left:121.99px;transform:scaleX(1.055)">o</i><i style="left:129.04px;transform:scaleX(1.019)">n</i><i style="left:135.84px;transform:scaleX(0.907)">)</i></div>
<div class="t" style="left:20.99px;top:437.84px;width:64.1px;"><i style="left:0.00px;transform:scaleX(0.953)">U</i><i style="left:8.26px;transform:scaleX(1.019)">n</i><i style="left:15.06px;transform:scaleX(0.916)">a</i><i style="left:21.17px;transform:scaleX(1.092)">l</i><i style="left:24.08px;transform:scaleX(1.092)">l</i><i style="left:26.99px;transform:scaleX(1.055)">o</i><i style="left:34.03px;transform:scaleX(0.925)">c</i><i style="left:39.58px;transform:scaleX(0.916)">a</i><i style="left:45.70px;transform:scaleX(1.221)">t</i><i style="left:49.77px;transform:scaleX(0.942)">e</i><i style="left:56.05px;transform:scaleX(1.060)">d</i></div>
<div class="t" style="left:104.61px;top:437.84px;width:90.3px;"><i style="left:0.00px;transform:scaleX(0.846)">P</i><i style="left:6.77px;transform:scaleX(1.053)">r</i><i style="left:10.98px;transform:scaleX(1.098)">i</i><i style="left:13.91px;transform:scaleX(1.042)">m</i><i style="left:24.32px;transform:scaleX(0.922)">a</i><i style="left:30.48px;transform:scaleX(1.053)">r</i><i style="left:34.69px;transform:scaleX(0.973)">y</i><i style="left:40.52px"> </i><i style="left:43.84px;transform:scaleX(1.065)">p</i><i style="left:50.94px;transform:scaleX(0.922)">a</i><i style="left:57.10px;transform:scaleX(1.053)">r</i><i style="left:61.31px;transform:scaleX(1.229)">t</i><i style="left:65.40px;transform:scaleX(1.098)">i</i><i style="left:68.33px;transform:scaleX(1.229)">t</i><i style="left:72.43px;transform:scaleX(1.098)">i</i><i style="left:75.36px;transform:scaleX(1.062)">o</i><i style="left:82.44px;transform:scaleX(1.025)">n</i></div>

<!-- dropdown menu -->
<div class="a" style="left:34px;top:53px;width:155px;height:150px;background:#f2f2f2;border:1px solid #cccccc"></div>
<div class="a" style="left:35px;top:54px;width:30px;height:149px;background:#f0f0f0"></div>
<div class="a" style="left:37px;top:122px;width:151px;height:22px;background:#91c9f7"></div>
<div class="a" style="left:65px;top:147px;width:123px;height:1px;background:#d7d7d7"></div>
<div class="a" style="left:65px;top:176px;width:123px;height:1px;background:#d7d7d7"></div>
<svg class="a" style="left:173px;top:156.5px" width="8" height="10" viewBox="0 0 8 10"><path d="M2 1.6 L5.6 5 L2 8.4" stroke="#3c3c3c" stroke-width="1.1" fill="none"/></svg>
<div class="t" style="left:68.61px;top:58.84px;width:41.1px;"><i style="left:0.00px;transform:scaleX(0.840)">R</i><i style="left:7.28px;transform:scaleX(0.953)">e</i><i style="left:13.64px;transform:scaleX(1.142)">f</i><i style="left:17.45px;transform:scaleX(1.060)">r</i><i style="left:21.68px;transform:scaleX(0.953)">e</i><i style="left:28.04px;transform:scaleX(0.860)">s</i><i style="left:33.20px;transform:scaleX(1.031)">h</i></div>
<div class="t" style="left:68.63px;top:80.84px;width:68.5px;"><i style="left:0.00px;transform:scaleX(0.826)">R</i><i style="left:7.16px;transform:scaleX(0.937)">e</i><i style="left:13.41px;transform:scaleX(0.845)">s</i><i style="left:18.48px;transform:scaleX(0.920)">c</i><i style="left:24.00px;transform:scaleX(0.911)">a</i><i style="left:30.09px;transform:scaleX(1.014)">n</i><i style="left:36.85px"> </i><i style="left:40.13px;transform:scaleX(0.967)">D</i><i style="left:48.51px;transform:scaleX(1.086)">i</i><i style="left:51.40px;transform:scaleX(0.845)">s</i><i style="left:56.48px;transform:scaleX(0.990)">k</i><i style="left:62.42px;transform:scaleX(0.845)">s</i></div>
<div class="t" style="left:69.03px;top:102.84px;width:62.0px;"><i style="left:0.00px;transform:scaleX(0.843)">C</i><i style="left:7.31px;transform:scaleX(1.028)">r</i><i style="left:11.41px;transform:scaleX(0.925)">e</i><i style="left:17.59px;transform:scaleX(0.900)">a</i><i style="left:23.59px;transform:scaleX(1.199)">t</i><i style="left:27.59px;transform:scaleX(0.925)">e</i><i style="left:33.76px"> </i><i style="left:36.99px;transform:scaleX(0.916)">V</i><i style="left:44.32px;transform:scaleX(0.967)">H</i><i style="left:52.70px;transform:scaleX(0.955)">D</i></div>
<div class="t" style="left:69.30px;top:124.84px;width:62.3px;"><i style="left:0.00px;transform:scaleX(0.956)">A</i><i style="left:7.65px;transform:scaleX(1.206)">t</i><i style="left:11.68px;transform:scaleX(1.206)">t</i><i style="left:15.70px;transform:scaleX(0.905)">a</i><i style="left:21.73px;transform:scaleX(0.914)">c</i><i style="left:27.22px;transform:scaleX(1.006)">h</i><i style="left:33.93px"> </i><i style="left:37.18px;transform:scaleX(0.921)">V</i><i style="left:44.55px;transform:scaleX(0.972)">H</i><i style="left:52.98px;transform:scaleX(0.960)">D</i></div>
<div class="t" style="left:69.20px;top:153.84px;width:45.9px;"><i style="left:0.00px;transform:scaleX(0.957)">A</i><i style="left:7.66px;transform:scaleX(1.079)">l</i><i style="left:10.54px;transform:scaleX(1.079)">l</i><i style="left:13.41px"> </i><i style="left:16.67px;transform:scaleX(0.849)">T</i><i style="left:22.89px;transform:scaleX(0.905)">a</i><i style="left:28.93px;transform:scaleX(0.840)">s</i><i style="left:33.97px;transform:scaleX(0.984)">k</i><i style="left:39.88px;transform:scaleX(0.840)">s</i></div>
<div class="t" style="left:68.75px;top:182.84px;width:26.5px;"><i style="left:0.00px;transform:scaleX(1.012)">H</i><i style="left:8.77px;transform:scaleX(0.968)">e</i><i style="left:15.23px;transform:scaleX(1.122)">l</i><i style="left:18.22px;transform:scaleX(1.088)">p</i></div>

<!-- cursor -->
<svg class="a" style="left:150px;top:137px" width="18" height="24" viewBox="0 0 18 24">
  <path d="M3.3 3.3 L3.3 19 L7 15.6 L9.6 21.4 L12.1 20.3 L9.6 14.7 L14.3 14.7 Z" fill="#000" opacity="0.18" transform="translate(1,1)"/>
  <path d="M2.5 2.2 L2.5 18.4 L6.3 14.9 L8.9 20.8 L11.5 19.7 L8.9 13.9 L13.9 13.9 Z" fill="#fff" stroke="#000" stroke-width="1" stroke-linejoin="miter"/>
</svg>
</div>
</body>
</html>
